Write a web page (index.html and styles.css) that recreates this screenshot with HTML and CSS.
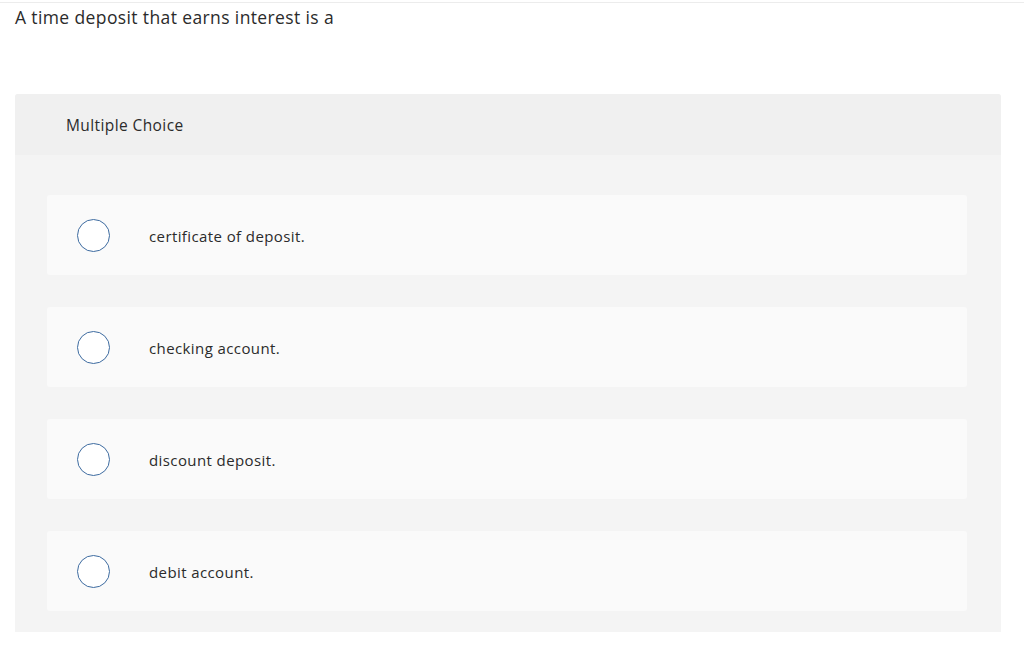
FILE: index.html
```html
<!DOCTYPE html>
<html lang="en">
<head>
  <meta charset="UTF-8" />
  <title>Question</title>
  <link rel="stylesheet" href="styles.css">
</head>
<body>
  <div class="prompt">A time deposit that earns interest is a</div>
  <div class="quiz">
    <div class="quiz-head">Multiple Choice</div>
    <div class="quiz-body">
      <label class="option"><span class="radio"></span><span class="option-text">certificate of deposit.</span></label>
      <label class="option"><span class="radio"></span><span class="option-text">checking account.</span></label>
      <label class="option"><span class="radio"></span><span class="option-text">discount deposit.</span></label>
      <label class="option"><span class="radio"></span><span class="option-text">debit account.</span></label>
    </div>
  </div>
</body>
</html>
```
FILE: styles.css
```css
body {
  margin: 0;
  padding: 0 23px 0 15px;
  font-family: 'Open Sans', sans-serif;
  color: #2b2b2b;
  background: #fff;
  border-top: 2px solid #fff;
}
.prompt {
  border-top: 1px solid #ececec;
  margin-left: -15px;
  margin-right: -23px;
  padding: 3px 15px 0;
  height: 88px;
  font-size: 17.5px;
  letter-spacing: 0.38px;
  line-height: 22px;
}
.quiz {
  background: #f4f4f4;
  border-radius: 3px 3px 0 0;
}
.quiz-head {
  background: #f0f0f0;
  border-radius: 3px 3px 0 0;
  height: 61px;
  box-sizing: border-box;
  padding: 21px 51px 0;
  font-size: 15.5px;
  letter-spacing: 0.4px;
  line-height: 20px;
}
.quiz-body {
  display: flex;
  flex-direction: column;
  gap: 32px;
  padding: 40px 34px 21px 32px;
}
.option {
  display: flex;
  align-items: center;
  height: 80px;
  background: #fafafa;
  border-radius: 3px;
  padding-left: 30px;
}
.radio {
  width: 31px;
  height: 31px;
  border: 1.5px solid #3d6ba0;
  border-radius: 50%;
  background: #fff;
  flex: none;
}
.option-text {
  margin-left: 39px;
  padding-top: 2px;
  font-size: 15px;
  letter-spacing: 0.4px;
}
```
